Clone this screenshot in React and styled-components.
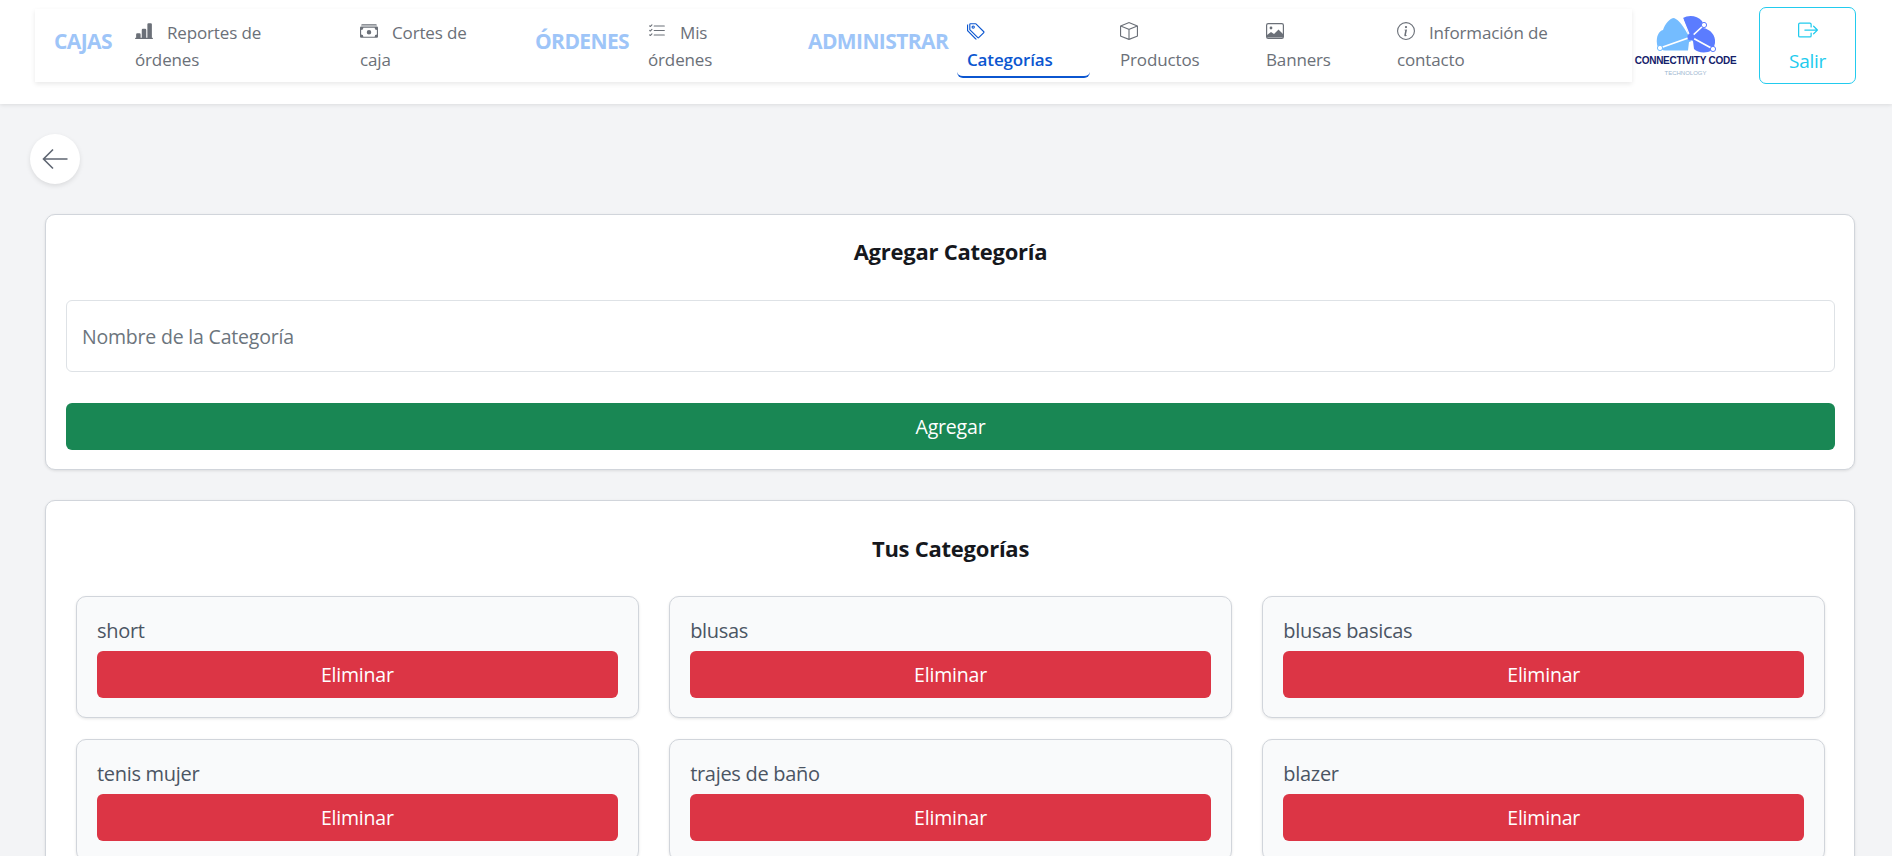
import React from 'react';
import styled, { createGlobalStyle } from 'styled-components';
import { BsBarChartLineFill, BsCashStack, BsListCheck, BsTags, BsBox, BsInfoCircle, BsBoxArrowRight } from 'react-icons/bs';

const Global = createGlobalStyle`
  html, body { margin: 0; height: 100%; overflow: hidden; }
  body { background: #f3f4f6; font-family: "Open Sans", "Noto Sans", sans-serif; }
  * { box-sizing: border-box; }
`;

const Header = styled.header`
  height: 104px;
  background: #fff;
  box-shadow: 0 1px 4px rgba(0,0,0,.1);
  display: flex;
  align-items: flex-start;
  padding: 7px 36px 0 35px;
`;
const Nav = styled.nav`
  width: 1597px;
  height: 73px;
  margin-top: 2px;
  padding-left: 19px;
  display: flex;
  align-items: flex-start;
  background: #fff;
  box-shadow: 0 2px 5px rgba(0,0,0,.09);
`;
const GroupLabel = styled.span`
  font-size: 21px;
  line-height: 28px;
  margin-top: 18px;
  font-weight: 700;
  letter-spacing: -0.6px;
  color: #9ec5f8;
  width: ${p => p.$w}px;
  flex: none;
`;
const NavItem = styled.a`
  flex: none;
  width: ${p => p.$w}px;
  margin-right: ${p => p.$mr ?? 0}px;
  height: 73px;
  padding: 10px 10px 0;
  font-size: 17px;
  line-height: 27px;
  letter-spacing: -0.15px;
  font-weight: ${p => p.$active ? 600 : 500};
  color: ${p => p.$active ? '#0b56d0' : '#6b7078'};
  position: relative;
  svg { width: 18px; height: 18px; vertical-align: -1px; margin-right: 14px; }
  ${p => p.$active && `
    &::after {
      content: '';
      position: absolute;
      left: 0; right: 0; bottom: 4px;
      height: 6px;
      border-bottom: 2px solid #0b56d0;
      border-radius: 0 0 6px 6px;
    }
  `}
`;
const LogoBox = styled.div`
  flex: none;
  width: 101px;
  margin: 8px 0 0 3px;
  display: flex;
  flex-direction: column;
  align-items: center;
`;
const LogoName = styled.span`
  font-family: "Liberation Sans", sans-serif;
  font-size: 10px;
  font-weight: 700;
  letter-spacing: -0.25px;
  white-space: nowrap;
  color: #14206a;
  line-height: 12px;
`;
const LogoSub = styled.span`
  font-family: "Liberation Sans", sans-serif;
  font-size: 6px;
  color: #9cb6cf;
  line-height: 9px;
  margin-top: 2px;
`;
const Logout = styled.button`
  flex: none;
  width: 97px;
  height: 77px;
  margin-left: 23px;
  background: #fff;
  border: 1px solid #22cbee;
  border-radius: 7px;
  color: #22cbee;
  font: 400 19px "Open Sans", sans-serif;
  letter-spacing: -0.3px;
  padding: 2px 0 0;
  display: flex;
  flex-direction: column;
  align-items: center;
  justify-content: center;
  gap: 8px;
  svg { font-size: 20px; }
`;
const Main = styled.main`
  padding: 30px 37px 0 45px;
`;
const BackButton = styled.button`
  width: 50px;
  height: 50px;
  margin: 0 0 30px -15px;
  padding: 0;
  display: flex;
  align-items: center;
  justify-content: center;
  background: #fff;
  border: 0;
  border-radius: 50%;
  color: #5f6672;
  box-shadow: 0 2px 5px rgba(0,0,0,.1);
`;
const Card = styled.section`
  background: #fff;
  border: 1px solid #d1d5db;
  border-radius: 10px;
  box-shadow: 0 1px 3px rgba(0,0,0,.1);
  padding: ${p => p.$pad};
  margin-bottom: 30px;
`;
const Title = styled.h2`
  margin: 0 0 ${p => p.$mb}px;
  font-size: 22px;
  line-height: 32px;
  font-weight: 700;
  letter-spacing: -0.25px;
  text-align: center;
  color: #16181d;
`;
const Input = styled.input`
  display: block;
  width: 100%;
  height: 72px;
  padding: 0 15px;
  margin-bottom: 31px;
  border: 1px solid #dee2e6;
  border-radius: 6px;
  background: #fff;
  font: 400 19.5px "Open Sans", sans-serif;
  letter-spacing: -0.2px;
  &::placeholder { color: #6c757d; opacity: 1; }
`;
const ActionButton = styled.button`
  display: block;
  width: 100%;
  height: 47px;
  border: 0;
  border-radius: 6px;
  background: ${p => p.$bg};
  color: #fff;
  font: 400 19.5px "Open Sans", sans-serif;
  letter-spacing: -0.2px;
`;
const Grid = styled.div`
  display: grid;
  grid-template-columns: repeat(3, 1fr);
  column-gap: 30.5px;
  row-gap: 21px;
`;
const Item = styled.article`
  background: #f9fafb;
  border: 1px solid #d1d5db;
  border-radius: 10px;
  box-shadow: 0 1px 3px rgba(0,0,0,.1);
  padding: 21px 20px 19px;
`;
const ItemName = styled.div`
  font-size: 20px;
  line-height: 26px;
  font-weight: 500;
  letter-spacing: -0.3px;
  margin-bottom: 7px;
  color: #4b5563;
`;

const ImageIcon = () => (
  <svg viewBox="0 0 18 18" aria-hidden="true">
    <rect x="0.6" y="1.6" width="16.8" height="14.8" rx="1.6" fill="#fff" stroke="currentColor" strokeWidth="1.2" />
    <circle cx="5" cy="6" r="1.4" fill="currentColor" />
    <path d="M1 15.5 V13 L5 10 L8 12 L12.5 7.5 L17 12 V15.5 Z" fill="currentColor" />
  </svg>
);

const BackArrow = () => (
  <svg width="26" height="22" viewBox="0 0 26 22" fill="none" stroke="currentColor" strokeWidth="1.6" aria-hidden="true">
    <path d="M11 1.5 L1.5 11 L11 20.5 M1.5 11 H25.5" />
  </svg>
);

const Logo = () => (
  <svg width="60" height="40" viewBox="0 0 60 40" aria-hidden="true">
    <path d="M1 29 C0 21 3 16 7 15 C9 9 14 3 18 3 C23 5 28 12 31 18 L37 26 L33 27 L32 35.5 L9 35.5 C4 35 1 32 1 29 Z" fill="#74bcff" />
    <path d="M27 3 C32 0 41 0 46 6 C47 8 47 10 47 13 C54 14 60 20 59 28 C58 33 56 36 52 37 C46 38 41 37 38 34 L37 26 L32 18 Z" fill="#5b7cff" />
    <path d="M4 33 L35 22 L48 10 M35 22 L57 34" stroke="#fff" strokeWidth="1.7" fill="none" />
    <path d="M26 2 L33 19 M35 22 L36 37" stroke="#fff" strokeWidth="1.2" fill="none" />
    <circle cx="35" cy="22" r="3.6" fill="#5b7cff" />
    <circle cx="4" cy="33" r="2.6" fill="#fff" stroke="#74bcff" />
    <circle cx="48" cy="10" r="2.6" fill="#fff" stroke="#5b7cff" />
    <circle cx="57" cy="34" r="2.6" fill="#fff" stroke="#5b7cff" />
  </svg>
);

const names = ['short', 'blusas', 'blusas basicas', 'tenis mujer', 'trajes de baño', 'blazer'];

export default function App() {
  return (
    <>
      <Global />
      <Header>
        <Nav>
          <GroupLabel $w={71}>CAJAS</GroupLabel>
          <NavItem $w={160} $mr={65}><BsBarChartLineFill />Reportes de órdenes</NavItem>
          <NavItem $w={150} $mr={35}><BsCashStack />Cortes de caja</NavItem>
          <GroupLabel $w={103}>ÓRDENES</GroupLabel>
          <NavItem $w={120} $mr={50}><BsListCheck />Mis órdenes</NavItem>
          <GroupLabel $w={149}>ADMINISTRAR</GroupLabel>
          <NavItem $w={133} $mr={20} $active><BsTags />Categorías</NavItem>
          <NavItem $w={120} $mr={26}><BsBox />Productos</NavItem>
          <NavItem $w={100} $mr={31}><ImageIcon />Banners</NavItem>
          <NavItem $w={190}><BsInfoCircle />Información de contacto</NavItem>
        </Nav>
        <LogoBox>
          <Logo />
          <LogoName>CONNECTIVITY CODE</LogoName>
          <LogoSub>TECHNOLOGY</LogoSub>
        </LogoBox>
        <Logout><BsBoxArrowRight />Salir</Logout>
      </Header>
      <Main>
        <BackButton aria-label="Volver"><BackArrow /></BackButton>
        <Card $pad="20px 19px 19px 20px">
          <Title $mb={33}>Agregar Categoría</Title>
          <Input placeholder="Nombre de la Categoría" />
          <ActionButton $bg="#198754">Agregar</ActionButton>
        </Card>
        <Card $pad="31px 29px 30px 30px">
          <Title $mb={32}>Tus Categorías</Title>
          <Grid>
            {names.map(n => (
              <Item key={n}>
                <ItemName>{n}</ItemName>
                <ActionButton $bg="#dc3545">Eliminar</ActionButton>
              </Item>
            ))}
          </Grid>
        </Card>
      </Main>
    </>
  );
}
